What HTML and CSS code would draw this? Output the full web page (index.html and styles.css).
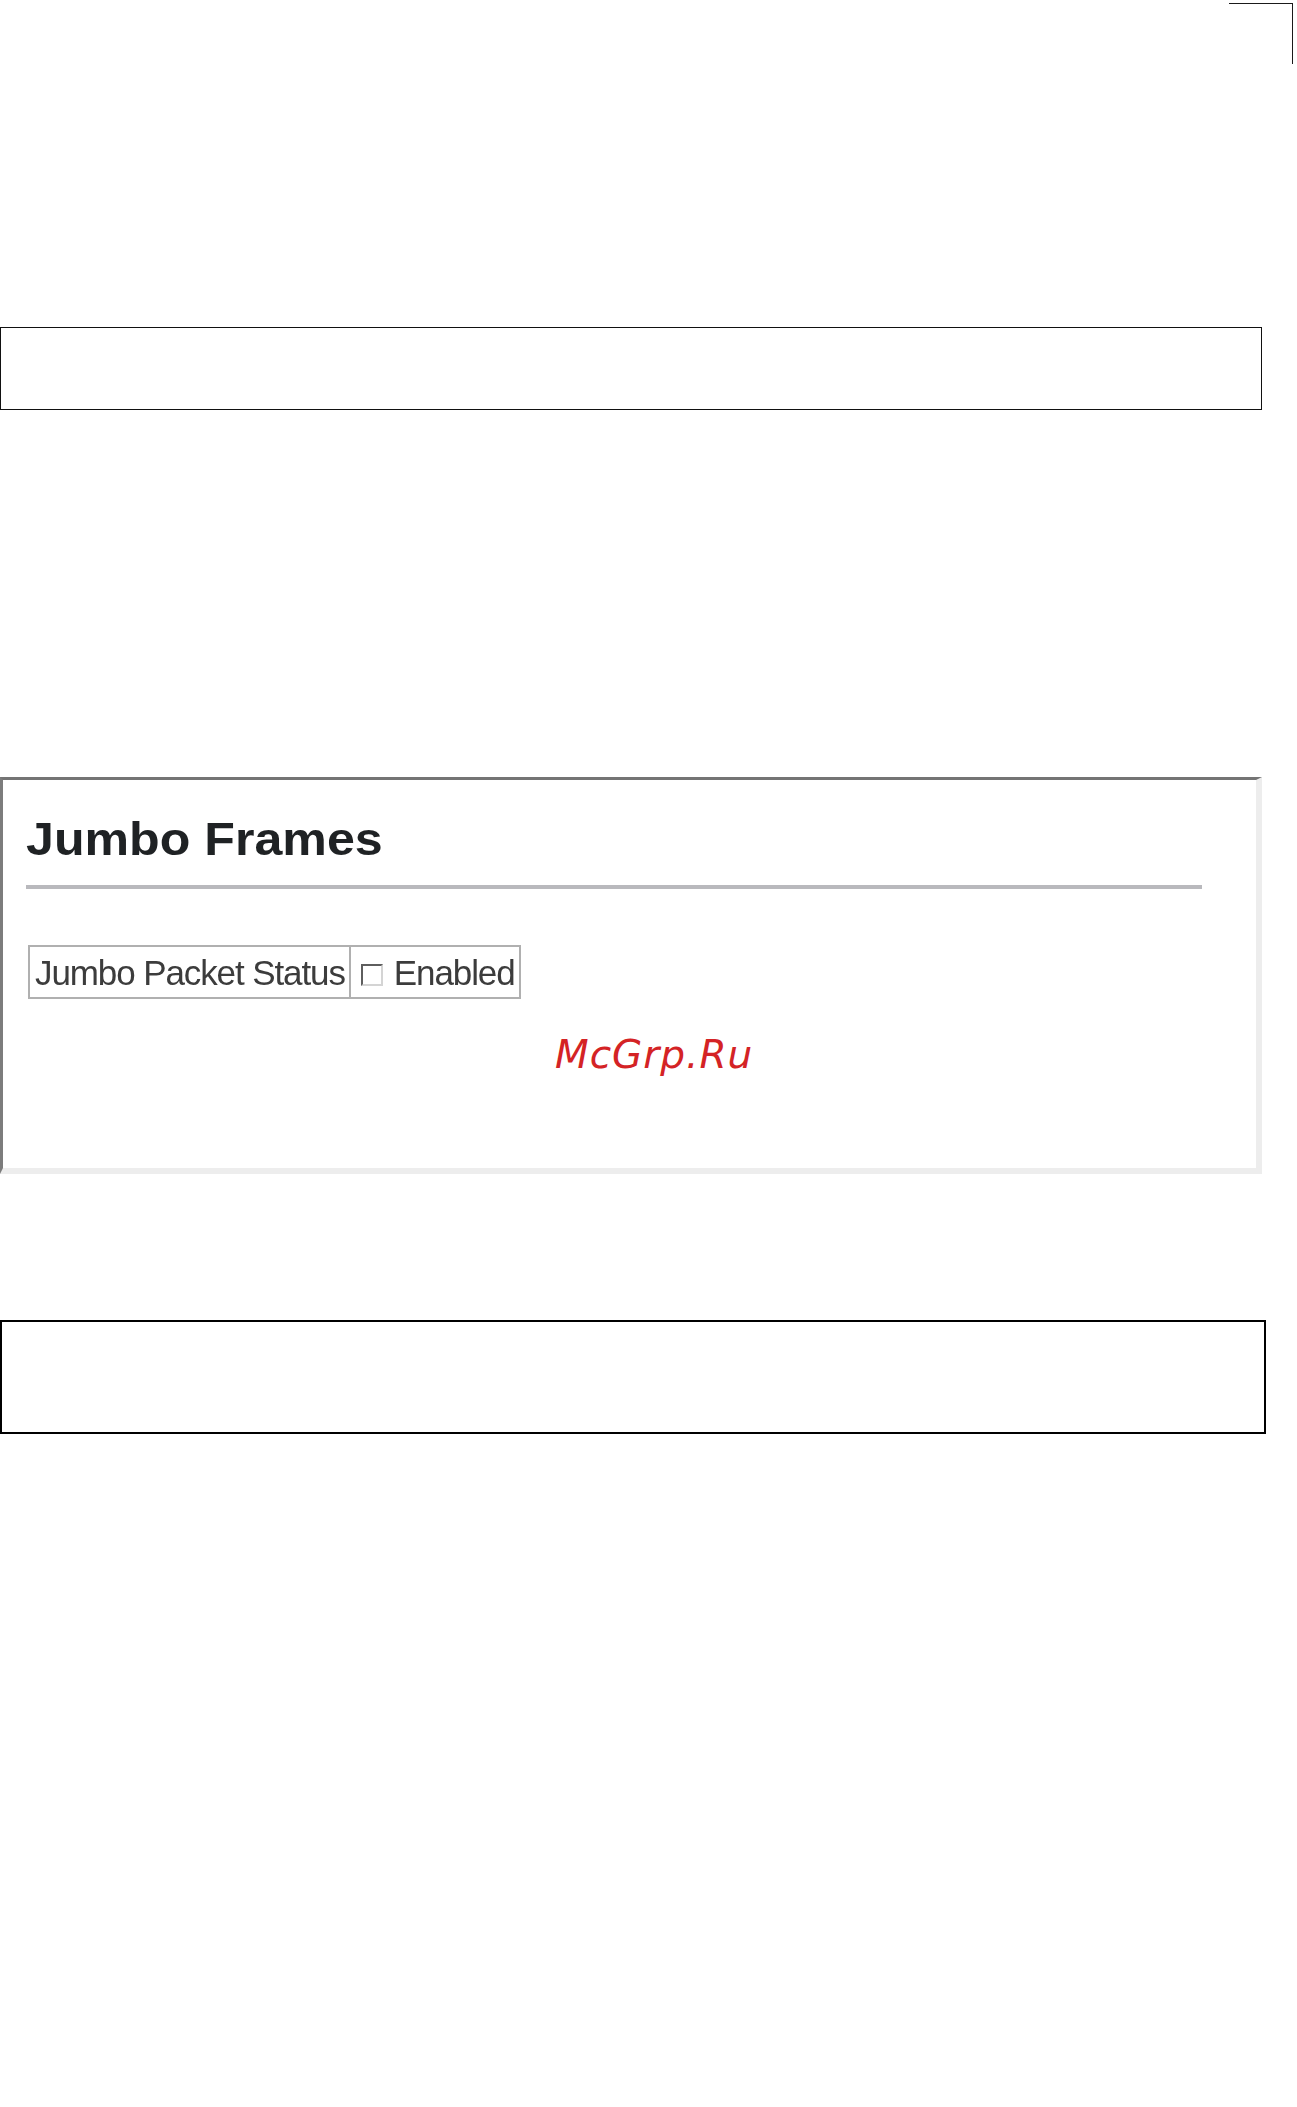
FILE: index.html
```html
<!DOCTYPE html>
<html lang="en">
<head>
<meta charset="utf-8">
<title>Jumbo Frames</title>
<link rel="stylesheet" href="styles.css">
</head>
<body>
  <div class="page">
    <div class="crop-row">
      <div class="crop-mark"></div>
    </div>

    <div class="note-box note-box--thin"></div>

    <section class="panel">
      <div class="panel-shot">
        <h1 class="panel-title">Jumbo Frames</h1>
        <div class="panel-rule"></div>
        <table class="form-table">
          <tr>
            <td class="cell cell--label">Jumbo Packet Status</td>
            <td class="cell cell--value"><span class="checkbox"></span><span class="value-text">Enabled</span></td>
          </tr>
        </table>
      </div>
      <div class="watermark">McGrp.Ru</div>
    </section>

    <div class="note-box note-box--thick"></div>
  </div>
</body>
</html>
```

FILE: styles.css
```css
html, body {
  margin: 0;
  padding: 0;
  background: #ffffff;
}

.page {
  width: 1297px;
  min-height: 2107px;
  display: flex;
  flex-direction: column;
  align-items: flex-start;
  font-family: "Liberation Sans", Arial, sans-serif;
}

/* page corner crop mark */
.crop-row {
  align-self: stretch;
  display: flex;
  justify-content: flex-end;
  padding-top: 3px;
  padding-right: 4px;
}

.crop-mark {
  width: 63px;
  height: 60px;
  border-top: 1px solid #1a1a1a;
  border-right: 1px solid #1a1a1a;
}

/* empty framed boxes */
.note-box {
  box-sizing: border-box;
  background: #fff;
}

.note-box--thin {
  margin-top: 263px;
  width: 1262px;
  height: 83px;
  border: 1px solid #111;
}

.note-box--thick {
  margin-top: 146px;
  width: 1266px;
  height: 114px;
  border: 2px solid #000;
}

/* embedded screen panel */
.panel {
  box-sizing: border-box;
  margin-top: 367px;
  width: 1262px;
  height: 397px;
  border-top: 3px solid #747474;
  border-left: 3px solid #7c7c7c;
  border-right: 6px solid #ededed;
  border-bottom: 6px solid #ededed;
  padding: 36px 0 0 23px;
  display: flex;
  flex-direction: column;
  align-items: flex-start;
}

.panel-shot {
  display: flex;
  flex-direction: column;
  align-items: flex-start;
  filter: blur(0.5px);
}

.panel-title {
  margin: 0;
  font-size: 46px;
  line-height: 46px;
  font-weight: bold;
  color: #1f2224;
  transform: scaleX(1.09);
  transform-origin: left center;
}

.panel-rule {
  margin-top: 23px;
  width: 1176px;
  height: 4px;
  background: #b9b9bd;
}

.form-table {
  margin-top: 56px;
  margin-left: 2px;
  border-collapse: collapse;
  border: 2px solid #b0b0b0;
}

.cell {
  height: 50px;
  padding: 1px 4px 0 5px;
  box-sizing: border-box;
  font-size: 35px;
  line-height: 49px;
  letter-spacing: -1.1px;
  color: #3c3c3c;
  white-space: nowrap;
  vertical-align: middle;
}

.cell--label {
  border-right: 2px solid #b0b0b0;
}

.cell--value {
  padding-left: 10px;
  padding-right: 4px;
}

.checkbox {
  display: inline-block;
  box-sizing: border-box;
  width: 22px;
  height: 22px;
  margin-right: 11px;
  vertical-align: -1px;
  border-top: 2px solid #5e5e5e;
  border-left: 2px solid #5e5e5e;
  border-right: 2px solid #d4d4d4;
  border-bottom: 2px solid #d4d4d4;
  background: #fff;
}

.value-text {
  display: inline-block;
}

.watermark {
  margin-top: 36px;
  margin-left: 529px;
  font-family: "DejaVu Sans", sans-serif;
  font-style: italic;
  font-size: 39px;
  line-height: 39px;
  letter-spacing: 1px;
  color: #d42325;
}
```
